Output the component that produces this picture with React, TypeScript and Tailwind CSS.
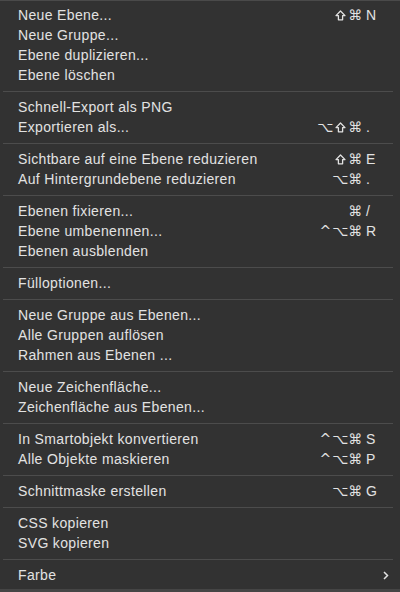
import { Fragment } from "react";

type Item = { label: string; keys?: string[]; submenu?: boolean };

const GROUPS: Item[][] = [
  [
    { label: "Neue Ebene...", keys: ["⇧", "⌘", "N"] },
    { label: "Neue Gruppe..." },
    { label: "Ebene duplizieren..." },
    { label: "Ebene löschen" },
  ],
  [
    { label: "Schnell-Export als PNG" },
    { label: "Exportieren als...", keys: ["⌥", "⇧", "⌘", "."] },
  ],
  [
    { label: "Sichtbare auf eine Ebene reduzieren", keys: ["⇧", "⌘", "E"] },
    { label: "Auf Hintergrundebene reduzieren", keys: ["⌥", "⌘", "."] },
  ],
  [
    { label: "Ebenen fixieren...", keys: ["⌘", "/"] },
    { label: "Ebene umbenennen...", keys: ["^", "⌥", "⌘", "R"] },
    { label: "Ebenen ausblenden" },
  ],
  [{ label: "Fülloptionen..." }],
  [
    { label: "Neue Gruppe aus Ebenen..." },
    { label: "Alle Gruppen auflösen" },
    { label: "Rahmen aus Ebenen ..." },
  ],
  [
    { label: "Neue Zeichenfläche..." },
    { label: "Zeichenfläche aus Ebenen..." },
  ],
  [
    { label: "In Smartobjekt konvertieren", keys: ["^", "⌥", "⌘", "S"] },
    { label: "Alle Objekte maskieren", keys: ["^", "⌥", "⌘", "P"] },
  ],
  [{ label: "Schnittmaske erstellen", keys: ["⌥", "⌘", "G"] }],
  [{ label: "CSS kopieren" }, { label: "SVG kopieren" }],
  [{ label: "Farbe", submenu: true }],
];

// outlined shift arrow, DejaVu's glyph is too thin
function ShiftIcon() {
  return (
    <svg width="11" height="11" viewBox="0 0 11 11">
      <path
        d="M5.5 1L10 5.6H7.6V9.8H3.4V5.6H1Z"
        fill="none"
        stroke="#e2e2e2"
        strokeWidth="1.3"
        strokeLinejoin="round"
      />
    </svg>
  );
}

function Shortcut({ keys }: { keys: string[] }) {
  const mods = keys.slice(0, -1);
  const key = keys[keys.length - 1];
  return (
    <div className="flex items-center">
      {mods.map((m, i) => (
        <span
          key={i}
          className="flex h-5 w-[15px] items-center justify-center text-[14px] leading-5"
          style={{ fontFamily: '"DejaVu Sans", sans-serif' }}
        >
          {m === "⇧" ? <ShiftIcon /> : m}
        </span>
      ))}
      <span className="w-[13px] pl-[3px] text-left">{key}</span>
    </div>
  );
}

function Row({ item }: { item: Item }) {
  return (
    <div className="flex h-5 items-center justify-between pl-[18px] pr-[24px]">
      <span>{item.label}</span>
      {item.keys && <Shortcut keys={item.keys} />}
      {item.submenu && (
        <svg width="6" height="9" viewBox="0 0 6 9" className="-mr-[13px]">
          <path d="M1 1l3.5 3.5L1 8" fill="none" stroke="#e2e2e2" strokeWidth="1.5" />
        </svg>
      )}
    </div>
  );
}

export default function App() {
  return (
    <div
      className="flex h-[592px] w-[400px] flex-col border-t border-[#4a4a4a] bg-[#323232] pt-[4px] text-[14px] tracking-[0.35px] text-[#e2e2e2]"
      style={{ fontFamily: '"Liberation Sans", Arial, sans-serif' }}
    >
      {GROUPS.map((group, gi) => (
        <Fragment key={gi}>
          {gi > 0 && (
            <div className="pb-[5px] pl-[3px] pr-[7px] pt-[6px]">
              <div className="h-px bg-[#4c4c4c]" />
            </div>
          )}
          {group.map((item) => (
            <Row key={item.label} item={item} />
          ))}
        </Fragment>
      ))}
      <div className="flex-1" />
      <div className="h-[3px] bg-[#454545]" />
    </div>
  );
}
